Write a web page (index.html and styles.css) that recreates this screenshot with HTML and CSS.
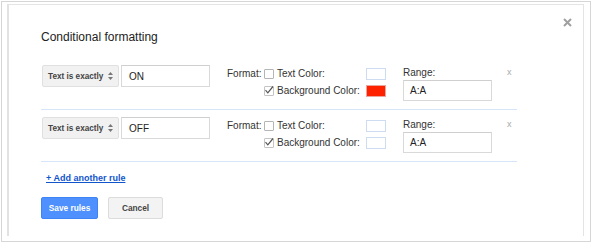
FILE: index.html
```html
<!DOCTYPE html>
<html>
<head>
<meta charset="utf-8">
<link rel="stylesheet" href="styles.css">
</head>
<body>
<div class="frame">
  <div class="dialog">
    <svg class="close" width="9" height="9" viewBox="0 0 9 9"><path d="M1 1L8 8M8 1L1 8" stroke="#a0a0a0" stroke-width="2"/></svg>
    <div class="title">Conditional formatting</div>
    <div class="rules">
      <div class="rule">
        <div class="select"><span>Text is exactly</span><svg class="arrows" width="5" height="8" viewBox="0 0 5 8"><path d="M2.5 0L5 3H0Z M2.5 8L5 5H0Z" fill="#777"/></svg></div>
        <div class="input val">ON</div>
        <div class="format">
          <span class="flabel">Format:</span>
          <span class="cb r1"></span>
          <span class="clabel r1">Text Color:</span>
          <span class="swatch r1"></span>
          <span class="cb checked r2"><svg width="10" height="10" viewBox="0 0 10 10"><path d="M1.5 5.2L3.8 7.8L9 1.5" fill="none" stroke="#555" stroke-width="1.2"/></svg></span>
          <span class="clabel r2">Background Color:</span>
          <span class="swatch red r2"></span>
        </div>
        <div class="range">
          <span class="rlabel">Range:</span>
          <div class="input rinput">A:A</div>
        </div>
        <span class="remove">x</span>
      </div>
      <div class="rule">
        <div class="select"><span>Text is exactly</span><svg class="arrows" width="5" height="8" viewBox="0 0 5 8"><path d="M2.5 0L5 3H0Z M2.5 8L5 5H0Z" fill="#777"/></svg></div>
        <div class="input val">OFF</div>
        <div class="format">
          <span class="flabel">Format:</span>
          <span class="cb r1"></span>
          <span class="clabel r1">Text Color:</span>
          <span class="swatch r1"></span>
          <span class="cb checked r2"><svg width="10" height="10" viewBox="0 0 10 10"><path d="M1.5 5.2L3.8 7.8L9 1.5" fill="none" stroke="#555" stroke-width="1.2"/></svg></span>
          <span class="clabel r2">Background Color:</span>
          <span class="swatch r2"></span>
        </div>
        <div class="range">
          <span class="rlabel">Range:</span>
          <div class="input rinput">A:A</div>
        </div>
        <span class="remove">x</span>
      </div>
    </div>
    <a class="add" href="#">+ Add another rule</a>
    <div class="buttons">
      <span class="btn save">Save rules</span>
      <span class="btn cancel">Cancel</span>
    </div>
  </div>
</div>
</body>
</html>
```
FILE: styles.css
```css
html, body {
  margin: 0;
  padding: 0;
  background: #fff;
}
body {
  font-family: "Liberation Sans", Arial, sans-serif;
  color: #222;
}
.frame {
  box-sizing: border-box;
  margin: 1px 0 0 1px;
  width: 590px;
  height: 241px;
  border: 1px solid #d6d6d6;
  box-shadow: 1px 1px 1px #9c9c9c;
  padding: 2px 0 0 5px;
}
.dialog {
  position: relative;
  box-sizing: border-box;
  width: 577px;
  height: 232px;
  border-top: 1px solid #e4e4e4;
  border-left: 2px solid #e2e2e2;
  border-right: 1px solid #e4e4e4;
  padding: 25px 0 0 32px;
}
.close {
  position: absolute;
  left: 554px;
  top: 13px;
}
.title {
  font-size: 12px;
  line-height: 15px;
  color: #222;
}
.rules {
  margin-top: 13px;
  width: 476px;
}
.rule {
  display: flex;
  align-items: flex-start;
  height: 37px;
  padding: 7px 0 7px 1px;
  border-bottom: 1px solid #d6e6f8;
}
.select {
  box-sizing: border-box;
  width: 77px;
  height: 22px;
  border: 1px solid #e0e0e0;
  border-radius: 2px;
  background: #f1f1f1;
  display: flex;
  align-items: center;
  padding-left: 5px;
  font-size: 8.2px;
  font-weight: bold;
  color: #444;
}
.arrows {
  margin-left: 5px;
}
.input {
  box-sizing: border-box;
  border: 1px solid #d9d9d9;
  border-top-color: #cfcfcf;
  background: #fff;
  font-size: 10px;
  color: #222;
  display: flex;
  align-items: center;
}
.val {
  width: 89px;
  height: 22px;
  margin-left: 2px;
  padding-left: 7px;
}
.format {
  margin-left: 17px;
  display: grid;
  grid-template-columns: 37px 13px 89px 20px;
  grid-template-rows: 17px 17px;
  align-items: center;
  font-size: 10px;
  color: #333;
}
.flabel {
  grid-row: 1;
  grid-column: 1;
}
.r1 { grid-row: 1; }
.r2 { grid-row: 2; }
.cb {
  grid-column: 2;
  box-sizing: border-box;
  width: 10px;
  height: 10px;
  border: 1px solid #b5b5b5;
  border-radius: 1px;
  background: #fff;
  position: relative;
}
.cb.checked {
  border-color: #c4c4c4;
}
.cb svg {
  position: absolute;
  left: -1px;
  top: -2px;
}
.clabel {
  grid-column: 3;
  white-space: nowrap;
}
.swatch {
  grid-column: 4;
  box-sizing: border-box;
  width: 20px;
  height: 12px;
  border: 1px solid #cddcf0;
  background: #fff;
}
.swatch.red {
  background: #ff2200;
  border-color: #e8a8a0;
}
.range {
  margin-left: 17px;
  display: flex;
  flex-direction: column;
}
.rlabel {
  font-size: 10px;
  line-height: 15px;
  color: #333;
}
.rinput {
  width: 89px;
  height: 21px;
  padding-left: 6px;
}
.remove {
  margin-left: 15px;
  font-size: 9px;
  line-height: 14px;
  color: #aaa;
}
.add {
  display: block;
  margin: 10px 0 0 5px;
  font-size: 9px;
  line-height: 12px;
  font-weight: bold;
  color: #1155cc;
  text-decoration: underline;
  width: max-content;
}
.buttons {
  display: flex;
  margin-top: 13px;
}
.btn {
  box-sizing: border-box;
  height: 22px;
  border-radius: 2px;
  display: flex;
  align-items: center;
  justify-content: center;
  font-size: 8.3px;
  font-weight: bold;
}
.save {
  width: 57px;
  background: #4d90fe;
  border: 1px solid #3f84f5;
  color: #fff;
}
.cancel {
  width: 55px;
  margin-left: 10px;
  background: #f3f3f3;
  border: 1px solid #dcdcdc;
  color: #444;
}
```
